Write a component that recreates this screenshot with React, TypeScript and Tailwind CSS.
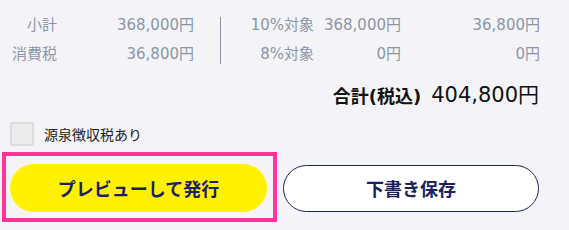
const font = { fontFamily: '"Noto Sans CJK JP", "Noto Sans", sans-serif' };
const numFont = { fontFamily: '"DejaVu Sans", "Noto Sans CJK JP", sans-serif' };

const App = () => {
  return (
    <div
      className="w-[569px] h-[230px] bg-[#f4f4f8] text-[#8c95a6] overflow-hidden"
      style={font}
    >
      <div className="flex items-center pt-[8px] h-[72px]">
        <div
          className="grid grid-cols-[47px_137px] gap-y-[8px] ml-[10px] text-[15px] leading-[21px]"
          style={numFont}
        >
          <span className="text-right">小計</span>
          <span className="text-right">368,000円</span>
          <span className="text-right">消費税</span>
          <span className="text-right">36,800円</span>
        </div>
        <div className="w-px h-[47px] bg-[#8c95a6] ml-[26px]" />
        <div
          className="grid grid-cols-[93px_87px_139px] gap-y-[8px] text-[15px] leading-[21px]"
          style={numFont}
        >
          <span className="text-right">10%対象</span>
          <span className="text-right">368,000円</span>
          <span className="text-right">36,800円</span>
          <span className="text-right">8%対象</span>
          <span className="text-right">0円</span>
          <span className="text-right">0円</span>
        </div>
      </div>
      <div
        className="flex items-center justify-end pr-[30px] h-[36px] mt-[6px] text-[#111]"
        style={numFont}
      >
        <span className="font-bold text-[18px]">合計(税込)</span>
        <span className="text-[21px] ml-[10px]">404,800円</span>
      </div>
      <label className="flex items-center ml-[10px] mt-[7px] h-[26px]">
        <span className="w-[24px] h-[24px] border-2 border-[#dcdcdc] bg-[#ececee] rounded-[2px]" />
        <span className="ml-[10px] text-[14px] text-[#222]">源泉徴収税あり</span>
      </label>
      <div className="flex items-center mt-[5px]">
        <div className="ml-[2px] border-[4px] border-[#ff3399] p-[8px_6px_6px_4px]">
          <button className="w-[257px] h-[48px] rounded-full bg-[#fff100] text-[#1b2260] font-bold text-[18px]">
            プレビューして発行
          </button>
        </div>
        <button className="ml-[6px] w-[256px] h-[47px] rounded-full bg-white border border-[#1b2260] text-[#1b2260] font-bold text-[18px] mt-[2px]">
          下書き保存
        </button>
      </div>
    </div>
  );
};

export default App;
